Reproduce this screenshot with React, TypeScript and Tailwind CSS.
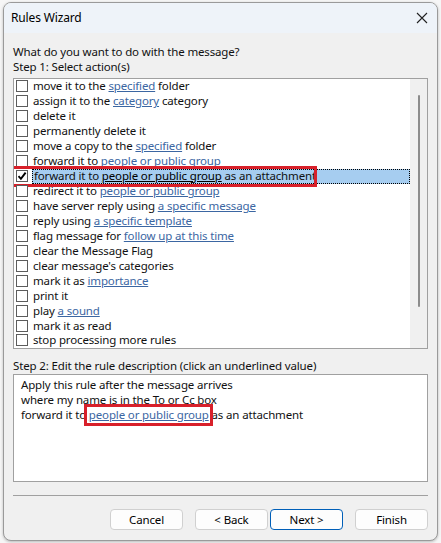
import React from "react";

type Part = { t: string; link?: boolean };

const actions: Part[][] = [
  [{ t: "move it to the " }, { t: "specified", link: true }, { t: " folder" }],
  [{ t: "assign it to the " }, { t: "category", link: true }, { t: " category" }],
  [{ t: "delete it" }],
  [{ t: "permanently delete it" }],
  [{ t: "move a copy to the " }, { t: "specified", link: true }, { t: " folder" }],
  [{ t: "forward it to " }, { t: "people or public group", link: true }],
  [{ t: "forward it to " }, { t: "people or public group", link: true }, { t: " as an attachment" }],
  [{ t: "redirect it to " }, { t: "people or public group", link: true }],
  [{ t: "have server reply using " }, { t: "a specific message", link: true }],
  [{ t: "reply using " }, { t: "a specific template", link: true }],
  [{ t: "flag message for " }, { t: "follow up at this time", link: true }],
  [{ t: "clear the Message Flag" }],
  [{ t: "clear message's categories" }],
  [{ t: "mark it as " }, { t: "importance", link: true }],
  [{ t: "print it" }],
  [{ t: "play " }, { t: "a sound", link: true }],
  [{ t: "mark it as read" }],
  [{ t: "stop processing more rules" }],
];

const SELECTED = 6;

function Check({ on }: { on: boolean }) {
  return (
    <span className="w-[12px] h-[12px] shrink-0 border border-[#5c5c5c] bg-white flex items-center justify-center">
      {on && (
        <svg width="10" height="10" viewBox="0 0 10 10">
          <path d="M1.5 5.2 L3.9 7.8 L8.6 1.6" fill="none" stroke="#000" strokeWidth="1.9" />
        </svg>
      )}
    </span>
  );
}

function ActionRow({ parts, index }: { parts: Part[]; index: number }) {
  const sel = index === SELECTED;
  return (
    <div className="relative flex items-center h-[15px] pl-[2px]">
      <Check on={sel} />
      <div
        className={
          sel
            ? "ml-[4px] flex-1 h-[15px] pl-[1px] leading-[12px] bg-[#a6cdf0] border border-dotted border-black whitespace-nowrap"
            : "ml-[4px] flex-1 pl-[1px] leading-[14px] whitespace-nowrap"
        }
      >
        {parts.map((p, i) =>
          p.link ? (
            <span key={i} className={sel ? "underline text-black" : "underline text-[#3b66a2]"}>
              {p.t}
            </span>
          ) : (
            <span key={i}>{p.t}</span>
          )
        )}
      </div>
      {sel && (
        <div className="absolute left-[-5px] top-[-3px] w-[308px] h-[21px] border-[3px] border-[#d8202a] pointer-events-none" />
      )}
    </div>
  );
}

function Btn({ label, primary }: { label: string; primary?: boolean }) {
  return (
    <button
      className={
        "w-[73px] h-[21px] rounded-[4px] bg-[#fdfdfd] text-[11.5px] text-black leading-none " +
        (primary ? "border border-[#005fb8]" : "border border-[#d0d0d0]")
      }
    >
      {label}
    </button>
  );
}

export default function App() {
  return (
    <div
      className="w-[441px] h-[543px] bg-[#f6f6f6] pt-[2px] pl-[3px] overflow-hidden text-[11.5px] tracking-[-0.15px] text-[#111]"
      style={{ fontFamily: '"Noto Sans", "Open Sans", sans-serif' }}
    >
      <div className="w-[435px] h-[539px] rounded-[8px] border border-[#9a9a9a] bg-[#f0f0f0] overflow-hidden flex flex-col shadow-[0_1px_3px_rgba(0,0,0,0.25)]">
        {/* title bar */}
        <div className="h-[30px] bg-[#eef3f9] flex items-center justify-between pl-[7px] pr-[9px] shrink-0">
          <span className="text-[12px] text-black">Rules Wizard</span>
          <svg width="12" height="12" viewBox="0 0 12 12">
            <path d="M1 1 L11 11 M11 1 L1 11" stroke="#222" strokeWidth="1.1" />
          </svg>
        </div>

        <div className="flex-1 flex flex-col px-[9px] pt-[11px]">
          <div className="leading-[15px]">What do you want to do with the message?</div>
          <div className="leading-[15px]">Step 1: Select action(s)</div>

          {/* action list */}
          <div className="mt-[4px] h-[271px] border border-[#a0a0a0] bg-white flex overflow-hidden">
            <div className="flex-1 flex flex-col">
              {actions.map((a, i) => (
                <ActionRow key={i} parts={a} index={i} />
              ))}
            </div>
            <div className="w-[17px] bg-[#f0f0f0] flex justify-center pt-[16px]">
              <div className="w-[2px] h-[212px] bg-[#8c8c8c] rounded-full" />
            </div>
          </div>

          <div className="mt-[9px] leading-[15px]">Step 2: Edit the rule description (click an underlined value)</div>

          {/* rule description */}
          <div className="mt-[1px] h-[108px] border border-[#a0a0a0] bg-white pl-[7px] pt-[2px] leading-[15px]">
            <div>Apply this rule after the message arrives</div>
            <div>where my name is in the To or Cc box</div>
            <div className="whitespace-nowrap">
              forward it to{" "}
              <span className="relative underline text-[#3b66a2]">
                people or public group
                <span className="absolute left-[-5px] right-[-4px] top-[-3px] bottom-[-4px] border-[3px] border-[#d8202a]" />
              </span>{" "}
              as an attachment
            </div>
          </div>

          <div className="mt-[13px] h-px bg-[#a0a0a0]" />

          <div className="mt-[13px] flex justify-end">
            <Btn label="Cancel" />
            <div className="ml-[12px]">
              <Btn label="< Back" />
            </div>
            <div className="ml-[2px]">
              <Btn label="Next >" primary />
            </div>
            <div className="ml-[12px]">
              <Btn label="Finish" />
            </div>
          </div>
        </div>
      </div>
    </div>
  );
}
